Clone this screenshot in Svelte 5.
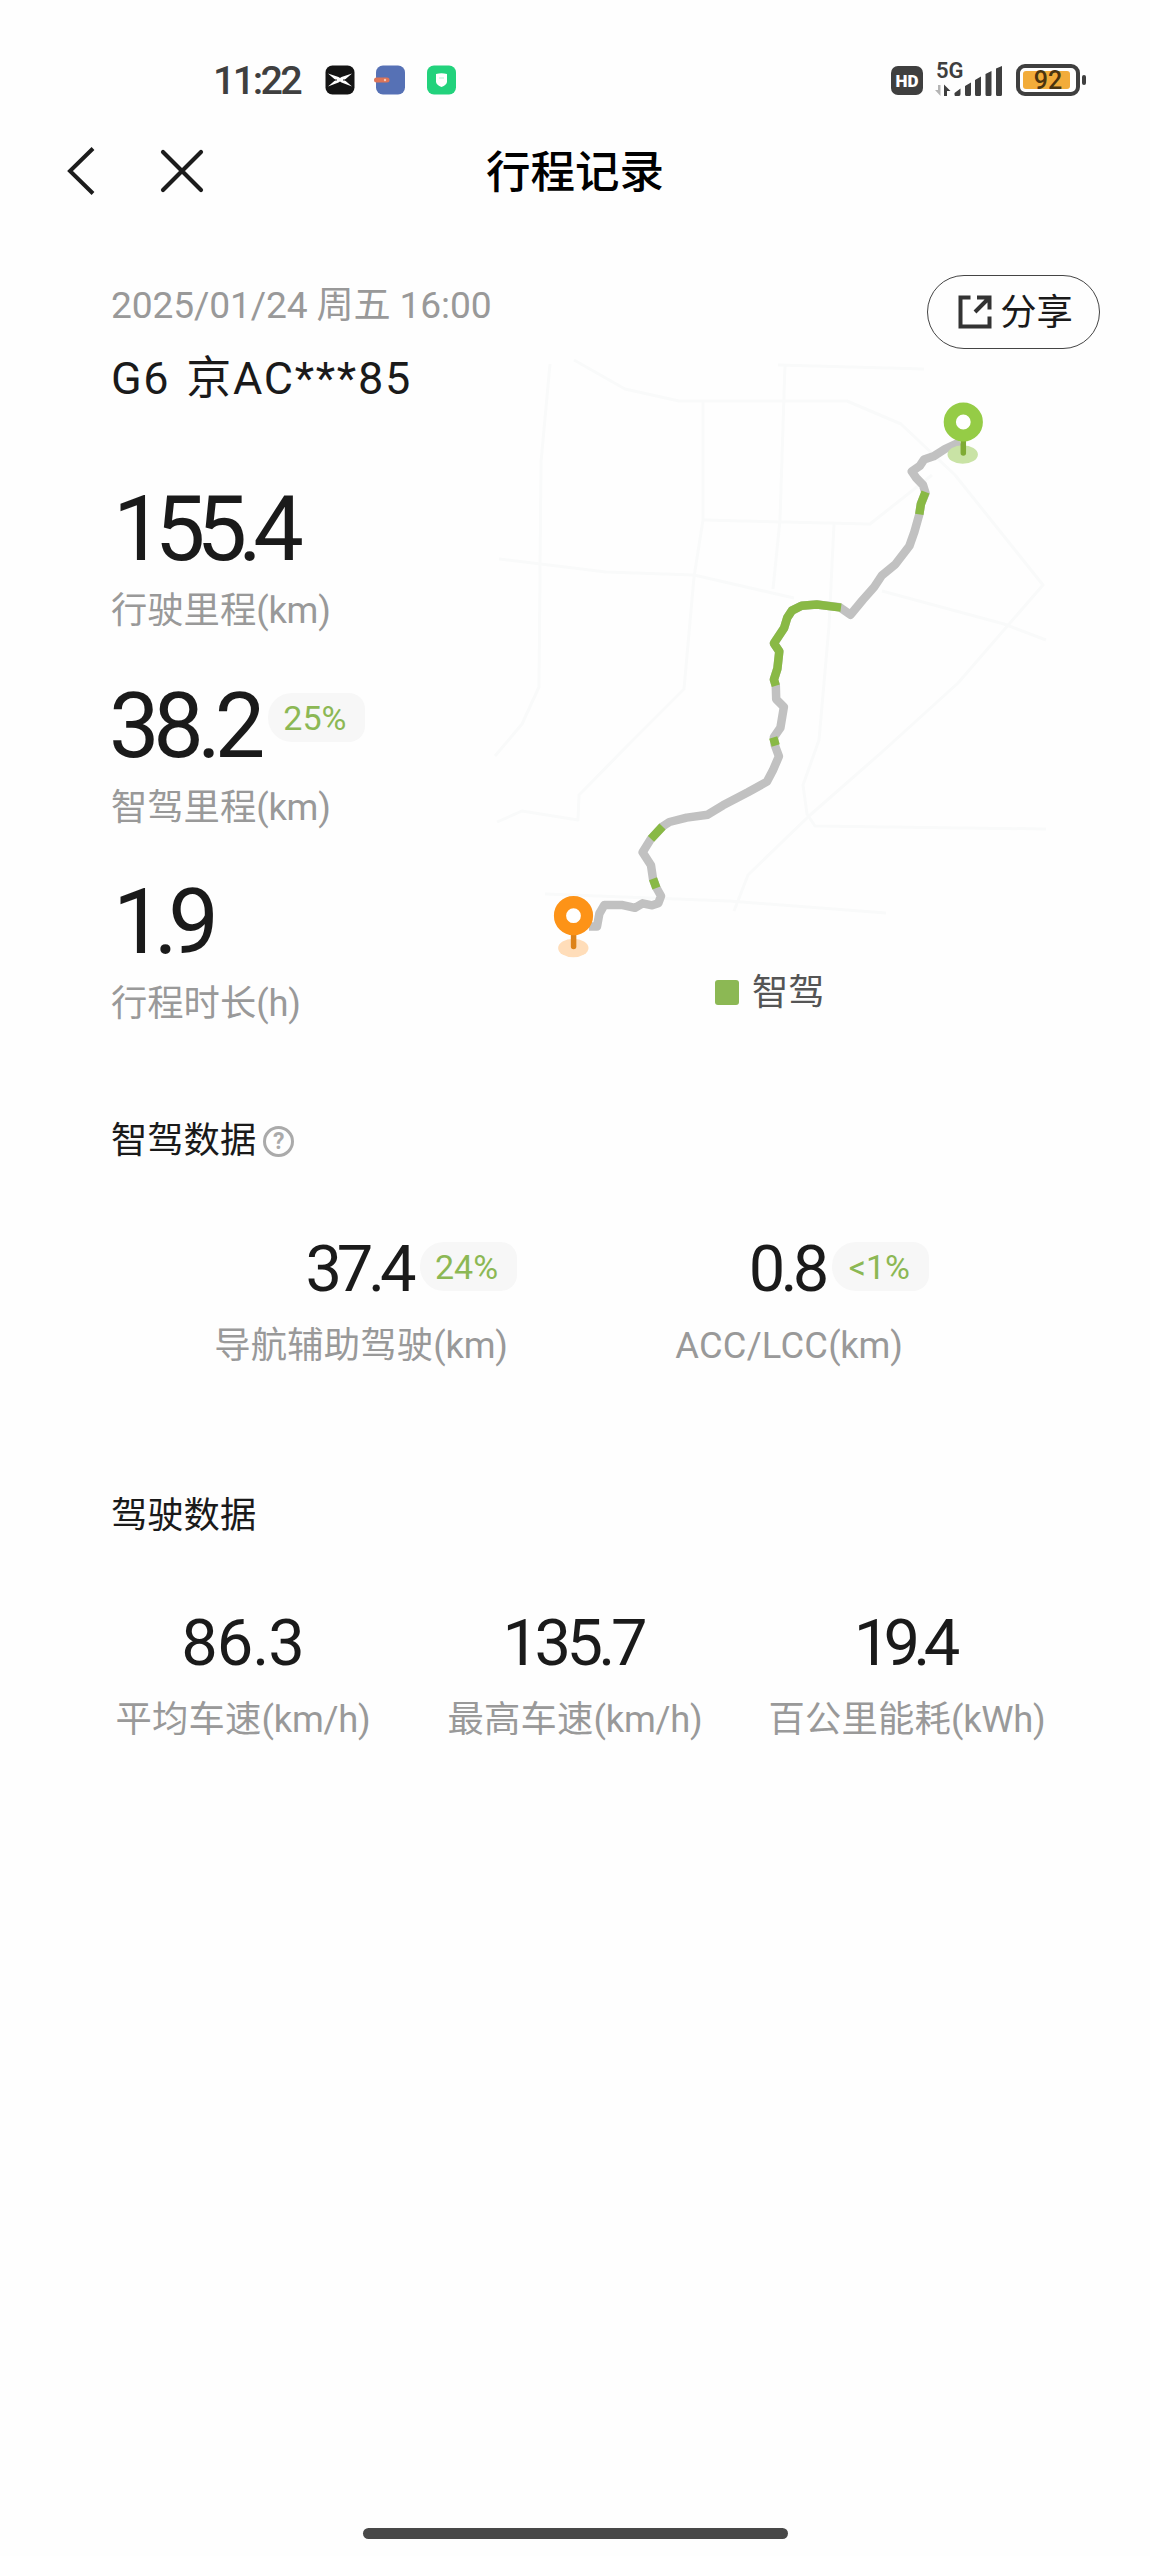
<script lang="ts">
  // 行程概览
  const summary = [
    { value: '155.4', label: '行驶里程', unit: 'km', percent: '', tracking: -8.8 },
    { value: '38.2', label: '智驾里程', unit: 'km', percent: '25%', tracking: -6.4 },
    { value: '1.9', label: '行程时长', unit: 'h', percent: '', tracking: -9.5 }
  ]

  const assist = [
    { value: '37.4', label: '导航辅助驾驶', unit: 'km', percent: '24%', tracking: -5.2 },
    { value: '0.8', label: 'ACC/LCC', unit: 'km', percent: '<1%', tracking: -4.8 }
  ]

  const driving = [
    { value: '86.3', label: '平均车速', unit: 'km/h', tracking: -1 },
    { value: '135.7', label: '最高车速', unit: 'km/h', tracking: -4.6 },
    { value: '19.4', label: '百公里能耗', unit: 'kWh', tracking: -6.8 }
  ]

  // 底图道路
  const roads = [
    '70,24 61,122 59,347 42,384 15,416',
    '223,61 223,180 214,237 204,349 153,400 99,455 98,480 42,471 17,482',
    '305,24 300,180 293,249',
    '94,20 145,49 199,61 367,61 421,84 475,135 563,245 478,343 402,412 329,476 268,535 254,571',
    '224,180 390,184 452,135',
    '19,219 126,232 214,235 314,258',
    '402,251 524,284 566,300',
    '354,184 349,286 339,400 323,445 327,474 335,486 566,489',
    '298,25 444,29',
    '65,554 249,561 406,573'
  ]

  // 完整轨迹与智驾路段
  const route =
    '480,102 465,109 453.5,116.3 444,119.6 440,125.7 431.7,131.4 436.3,138 443,145 445.5,153 440.9,164 439.3,174.3 434.4,191.8 429.4,206 415.2,224.5 401.8,235.5 394.2,247 382.7,260 370.5,274.7 359.7,267.3 336.8,264.5 321.5,265.7 311.9,270.6 307.3,277.6 304.2,287.8 293.9,303.3 299.3,311.4 297.4,328.6 293.9,339.6 295.8,345.7 296.2,359.2 303.9,366.9 300.4,387.8 293.9,397.1 294.7,404.9 298.9,416.3 292.8,430.6 287,441.6 267.9,452.2 243,465.3 227.7,474.7 206.7,477.6 189.4,482 182.5,486.5 171,498.8 162.6,512.2 171,525.3 173,538.8 176,547 181,556 178.3,563.3 172.2,565.3 162.6,563.3 155,567.8 141.6,564.9 124.4,564.9 119.4,573.5 117,586.5 109,586.5'
  const assisted = [
    '445.5,152 440.9,164 439.3,174.3',
    '361,267.6 336.8,264.5 321.5,265.7 311.9,270.6 307.3,277.6 304.2,287.8 293.9,303.3 299.3,311.4 297.4,328.6 293.9,339.6 295.8,345.7',
    '293.2,397.5 295.7,405.5',
    '182.5,486.5 171,498.8',
    '173,538.8 176.4,548'
  ]
</script>

<div class="page">
  <div class="status">
    <span class="time">11:22</span>
    <svg class="apps" width="132" height="30" viewBox="0 0 132 30">
      <rect x="0.5" y="0.5" width="29" height="29" rx="7" fill="#141414" />
      <path d="M3 8.5 L13.5 12 L15 13 L16.5 12 L27 8.5 L19.5 15 L27 21.5 L16.5 17.5 L15 16.5 L13.5 17.5 L3 21.5 L10.5 15 Z" fill="#fff" />
      <path d="M3.5 15 H12 M18 15 H26.5" stroke="#141414" stroke-width="1" />
      <rect x="51" y="0.5" width="29" height="29" rx="7" fill="#5671b5" />
      <rect x="49" y="12.5" width="15.5" height="5" rx="2.5" fill="#dc7458" />
      <circle cx="60" cy="15" r="1.2" fill="#f6c9ba" />
      <rect x="102" y="0.5" width="29" height="29" rx="7" fill="#22d27c" />
      <path d="M111 9 Q116.5 7.5 122 9 V17 Q121.5 20 116.5 22 Q111.5 20 111 17 Z" fill="#fff" />
      <path d="M114 13 H119" stroke="#b8efd3" stroke-width="1" />
    </svg>
    <span class="grow"></span>
    <span class="hd">HD</span>
    <div class="signal">
      <span class="net">5G</span>
      <svg width="70" height="32" viewBox="0 0 70 32">
        <path d="M6.5 21 V32 L1 26 H4 V21 Z" fill="#b5b5b5" />
        <path d="M10 32 V20.5 L16.5 27 H13 V32 Z" fill="#3f3f3f" />
        <path d="M20.5 29 L26.5 24.5 V30 Q26.5 32 25 32 H21.5 Q20.5 32 20.5 30.5 Z M31 22 L37 18.5 V30.5 Q37 32 35.5 32 H32.5 Q31 32 31 30.5 Z M41 16 L47 12.5 V30.5 Q47 32 45.5 32 H42.5 Q41 32 41 30.5 Z M51.5 10 L57.5 7 V30.5 Q57.5 32 56 32 H53 Q51.5 32 51.5 30.5 Z M62 4.5 L68 2 V30.5 Q68 32 66.5 32 H63.5 Q62 32 62 30.5 Z" fill="#3f3f3f" />
      </svg>
    </div>
    <div class="battery"><span>92</span></div>
    <i class="cap"></i>
  </div>

  <div class="nav">
    <svg class="back" width="30" height="50" viewBox="0 0 30 50">
      <path d="M27 2.5 L4 25 L27 47.5" fill="none" stroke="#1c1c1c" stroke-width="4" />
    </svg>
    <svg class="close" width="46" height="46" viewBox="0 0 46 46">
      <path d="M4 4 L42 42 M42 4 L4 42" stroke="#1c1c1c" stroke-width="4.2" stroke-linecap="round" />
    </svg>
    <h1>行程记录</h1>
  </div>

  <div class="hero">
    <div class="info">
      <div class="date">2025/01/24 周五 16:00</div>
      <div class="plate">G6 京AC***85</div>
      {#each summary as item}
        <div class="metric">
          <div class="big">
            <span class:one={item.value.startsWith('1')} style:letter-spacing="{item.tracking}px">{item.value}</span>
            {#if item.percent}<span class="badge">{item.percent}</span>{/if}
          </div>
          <div class="label">{item.label}<span class="unit">({item.unit})</span></div>
        </div>
      {/each}
    </div>

    <div class="map">
      <button class="share">
        <svg width="34" height="34" viewBox="0 0 34 34" fill="none" stroke="#333" stroke-width="4">
          <path d="M12.5 2.5 H2.5 V31.5 H31.5 V21.5" />
          <path d="M19 2.5 H31.5 V14.5 M30.5 3.5 L17 17" />
        </svg>
        <span>分享</span>
      </button>
      <svg class="track" width="600" height="618" viewBox="0 9 600 618" fill="none" stroke-linejoin="round">
        {#each roads as points}
          <polyline {points} stroke="#f9fafa" stroke-width="3" />
        {/each}
        <polyline points={route} stroke="#c1c1c1" stroke-width="8.5" />
        {#each assisted as points}
          <polyline {points} stroke="#89b945" stroke-width="8.5" />
        {/each}
        <ellipse cx="482.7" cy="114.5" rx="15.2" ry="9.3" fill="#c9e3a5" />
        <path d="M483.3 100 V113" stroke="#7fab35" stroke-width="5.5" stroke-linecap="round" />
        <circle cx="483.3" cy="82" r="13.5" stroke="#95cc46" stroke-width="12.2" fill="#fff" />
        <ellipse cx="93.3" cy="608" rx="15.2" ry="9.3" fill="#ffddb9" />
        <path d="M93.6 594 V606.5" stroke="#dd831a" stroke-width="5.5" stroke-linecap="round" />
        <circle cx="93.5" cy="575.7" r="13.5" stroke="#fd9317" stroke-width="12.2" fill="#fff" />
      </svg>
      <div class="legend"><i></i><span>智驾</span></div>
    </div>
  </div>

  <h2>
    智驾数据
    <span class="help">?</span>
  </h2>
  <div class="grid two">
    {#each assist as item}
      <div class="cell">
        <div class="num" style:letter-spacing="{item.tracking}px" style:padding-right="{-item.tracking}px">
          {item.value}<span class="badge">{item.percent}</span>
        </div>
        <div class="label">{item.label}<span class="unit">({item.unit})</span></div>
      </div>
    {/each}
  </div>

  <h2 class="second">驾驶数据</h2>
  <div class="grid three">
    {#each driving as item}
      <div class="cell">
        <div class="num" style:letter-spacing="{item.tracking}px" style:padding-right="{-item.tracking}px">{item.value}</div>
        <div class="label">{item.label}<span class="unit">({item.unit})</span></div>
      </div>
    {/each}
  </div>

  <div class="home"></div>
</div>

<style>
  :global(body) {
    background: #fefefe;
  }

  .page {
    box-sizing: border-box;
    width: 1150px;
    height: 2556px;
    display: flex;
    flex-direction: column;
    background: #fefefe;
    color: #1a1a1a;
    font-family: Roboto, "Noto Sans CJK SC", sans-serif;
    white-space: nowrap;
    overflow: hidden;
  }

  .status {
    height: 64px;
    padding: 48px 64px 0 213px;
    display: flex;
    align-items: center;
    color: #3f3f3f;
  }

  .time {
    width: 112px;
    font-size: 39.5px;
    font-weight: 500;
    letter-spacing: -2.6px;
  }

  .grow {
    flex: 1;
  }

  .hd {
    width: 32px;
    height: 29px;
    border-radius: 7px;
    background: #3f3f3f;
    color: #fff;
    font-size: 17px;
    font-weight: 900;
    line-height: 30px;
    text-align: center;
  }

  .signal {
    position: relative;
    height: 32px;
    margin-left: 11px;
  }

  .signal svg {
    display: block;
  }

  .net {
    position: absolute;
    left: 2px;
    top: -3px;
    font-size: 22px;
    font-weight: 600;
    line-height: 20px;
  }

  .battery {
    box-sizing: border-box;
    width: 64px;
    height: 32px;
    margin-left: 12px;
    padding: 3px;
    border: 4px solid #3f3f3f;
    border-radius: 9px;
  }

  .battery span {
    display: block;
    width: 47px;
    height: 18px;
    border-radius: 3px;
    background: #f2ac3a;
    color: #4a3410;
    font-size: 25px;
    font-weight: 500;
    line-height: 19px;
    text-align: center;
    text-indent: 3px;
  }

  .cap {
    width: 4px;
    height: 10px;
    margin-left: 2px;
    border-radius: 2px;
    background: #3f3f3f;
  }

  .nav {
    position: relative;
    height: 118px;
    display: flex;
    align-items: center;
    padding-left: 66px;
  }

  .close {
    margin-left: 63px;
  }

  h1 {
    position: absolute;
    left: 0;
    right: 0;
    margin: 3px 0 0;
    color: #000;
    font-size: 44.5px;
    font-weight: 500;
    line-height: 60px;
    text-align: center;
  }

  .hero {
    display: grid;
    grid-template-columns: 369px 620px;
    padding-left: 111px;
  }

  .info {
    padding-top: 50px;
  }

  .date {
    color: #999;
    font-size: 37.2px;
    line-height: 51px;
    letter-spacing: -0.15px;
  }

  .plate {
    margin: 18px 0 75px;
    font-size: 45px;
    line-height: 60px;
    letter-spacing: 1.7px;
    word-spacing: 3px;
  }

  .metric {
    height: 150px;
    margin-bottom: 46.7px;
  }

  .metric:last-child {
    margin-bottom: 0;
  }

  .big {
    display: flex;
    margin-left: -2px;
    font-size: 90px;
    line-height: 92px;
  }

  .one {
    margin-left: 4px;
  }

  .label {
    color: #999;
    font-size: 36.3px;
    line-height: 50px;
  }

  .metric .label {
    margin-top: 10px;
  }

  .unit {
    letter-spacing: -0.2px;
  }

  .badge {
    box-sizing: border-box;
    width: 97px;
    height: 49px;
    padding-right: 3px;
    border-radius: 24px 16px 16px 24px;
    background: #f7f7f7;
    color: #8cb854;
    font-size: 34px;
    line-height: 50px;
    letter-spacing: 0;
    text-align: center;
  }

  .big .badge {
    margin: 12px 0 0 9px;
  }

  .map {
    display: flex;
    flex-direction: column;
  }

  .share {
    box-sizing: border-box;
    align-self: flex-end;
    width: 173px;
    height: 74px;
    margin-top: 45px;
    padding: 0 0 0 4px;
    display: flex;
    align-items: center;
    justify-content: center;
    gap: 8px;
    border: 1px solid #444;
    border-radius: 37px;
    background: transparent;
    color: #1a1a1a;
    font: inherit;
    font-size: 36.3px;
    line-height: 50px;
  }

  .share span,
  .legend span {
    margin-top: 1px;
  }

  .legend {
    display: flex;
    align-items: center;
    gap: 13px;
    padding-left: 235px;
    color: #555;
    font-size: 36.3px;
    line-height: 50px;
  }

  .legend i {
    width: 24px;
    height: 25px;
    border-radius: 3px;
    background: #8cb854;
  }

  h2 {
    display: flex;
    align-items: center;
    gap: 7px;
    margin: 89px 0 0 111px;
    font-size: 36.3px;
    font-weight: 400;
    line-height: 50px;
  }

  .second {
    margin-top: 120px;
  }

  .help {
    box-sizing: border-box;
    width: 31px;
    height: 31px;
    border: 3px solid #aaa;
    border-radius: 50%;
    color: #aaa;
    font-size: 23px;
    font-weight: 700;
    line-height: 26px;
    text-align: center;
  }

  .grid {
    display: grid;
    text-align: center;
  }

  .two {
    grid-template-columns: repeat(2, 428px);
    margin: 67px 0 0 147px;
  }

  .three {
    grid-template-columns: repeat(3, 332px);
    margin: 66px 0 0 77px;
  }

  .num {
    position: relative;
    width: fit-content;
    margin: 0 auto;
    font-size: 65px;
    line-height: 72px;
  }

  .num .badge {
    position: absolute;
    left: calc(100% + 3px);
    top: 9px;
  }

  .cell .label {
    margin-top: 16px;
    letter-spacing: 0.2px;
  }

  .home {
    width: 425px;
    height: 11px;
    margin: auto auto 17px;
    border-radius: 6px;
    background: #484848;
  }
</style>
